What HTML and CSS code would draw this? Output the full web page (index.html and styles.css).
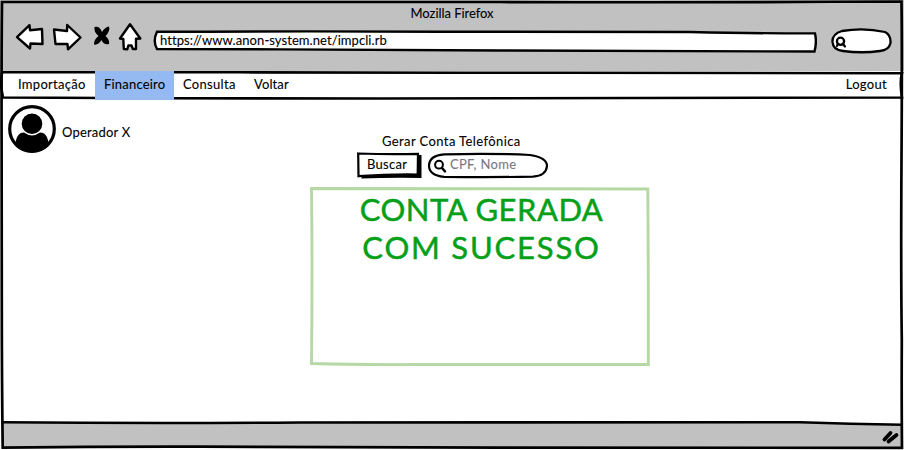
FILE: index.html
```html
<!DOCTYPE html>
<html lang="pt-BR">
<head>
<meta charset="utf-8">
<title>Mozilla Firefox</title>
<link rel="stylesheet" href="styles.css">
</head>
<body>
<div class="window">
  <header class="chrome">
    <div class="title"><span class="t-title">Mozilla Firefox</span></div>
    <div class="toolbar">
      <svg class="tools" width="130" height="30" viewBox="14 22 130 30">
        <g fill="#fff" stroke="#000" stroke-width="2.400" stroke-linejoin="round">
          <path d="M17 37.200 29.500 25.200 30 30.200 42 29 42.500 44 30.500 43.500 30 48.500Z"/>
          <path d="M54 29.500 67 31 67.200 25 80.500 37.500 68 49.300 67.500 44 55.500 44Z"/>
          <path d="M130 24.300 140.300 38.500 136 38.700 136 49 132.800 49 131.500 45.500 128.300 45.500 127.300 49.200 123.800 49 123.300 39 120 38.500Z"/>
        </g>
        <path d="M94.500 27Q99.500 25.500 102 32Q105 27 109 26.500Q110.500 31 105.500 36Q110 40 109 44Q104 45.500 101.500 40Q98 45.500 94 44.500Q93.500 40 98.500 36Q93.500 31.500 94.500 27Z"/>
      </svg>
      <div class="url">
        <svg class="outline" width="664" height="24" viewBox="153 29 664 24"><path d="M157 31.800Q300 31 440 31.700T690 32Q760 33.500 815 33.400Q817 42 814.500 51.500Q650 51 500 50.500T280 49.400L157 49Q152.500 41 157 31.800Z" fill="#fff" stroke="#000" stroke-width="2.400"/></svg>
        <span class="t-url">https://www.anon-system.net/impcli.rb</span>
      </div>
      <div class="find">
        <svg width="62" height="26" viewBox="830 28 62 26"><path d="M842 31Q864 27.500 885 32Q891 35 890.500 43Q889 50 880 51Q862 53.500 843 51Q833 50 832.500 42Q832 34 842 31Z" fill="#fff" stroke="#000" stroke-width="2.300"/><circle cx="840.500" cy="41.300" r="3.600" fill="none" stroke="#000" stroke-width="2.300"/><path d="m842.800 43.800 2.200 2.700M837.500 44.500l-.5 1.500" stroke="#000" stroke-width="2.200" stroke-linecap="round"/></svg>
      </div>
    </div>
  </header>
  <nav class="menu">
    <svg class="outline" width="904" height="29" viewBox="0 71 904 29"><path d="M2 72.300 240 72.300Q400 73 560 72.700T902 73.200Q899.500 82 902 97.500Q600 98.500 380 98.500T160 98.300T3 97.500Q0 86 2 72.300Z" fill="#fff" stroke="#000" stroke-width="2.600"/></svg>
    <a class="item first"><span class="t-imp">Importação</span></a>
    <a class="item active"><span class="t-fin">Financeiro</span></a>
    <a class="item consult"><span class="t-con">Consulta</span></a>
    <a class="item"><span class="t-vol">Voltar</span></a>
    <a class="item last"><span class="t-log">Logout</span></a>
  </nav>
  <main class="page">
    <div class="user">
      <svg width="50" height="50" viewBox="0 0 50 50"><defs><clipPath id="disc"><circle cx="25" cy="25" r="23.500"/></clipPath></defs><circle cx="25" cy="25" r="22.300" fill="#fff" stroke="#000" stroke-width="3.200"/><g clip-path="url(#disc)"><circle cx="25" cy="19.700" r="10.300"/><path d="M8 46Q8 28.500 17 28.600Q25 34.500 33 28.600Q42 28.500 42 46V50H8Z"/></g></svg>
      <span class="t-user">Operador X</span>
    </div>
    <section class="bill">
      <h1><span class="t-head">Gerar Conta Telefônica</span></h1>
      <div class="search">
        <button type="button">
          <svg class="outline" width="66" height="28" viewBox="356 151 66 28"><path d="M361 156 421.500 155V178Q390 177.500 361.500 178.500Z"/><path d="M358.200 153.500Q390 154.500 418 153.800L417.700 174.500Q390 174 358.500 176.200Z" fill="#fff" stroke="#000" stroke-width="2.200"/></svg>
          <span class="t-btn">Buscar</span>
        </button>
        <div class="field">
          <svg class="outline" width="122" height="28" viewBox="427 151 122 28"><path d="M444 154.400Q490 153 530 155Q547 157.500 547 166Q546 176 533 176.600Q490 177.500 444 176.800Q429 175.500 429 165.500Q429.500 155.500 444 154.400Z" fill="#fff" stroke="#000" stroke-width="2.200"/><circle cx="439" cy="164.700" r="3.900" fill="none" stroke="#000" stroke-width="2"/><path d="m442 168 3 3.300" stroke="#000" stroke-width="2.500" stroke-linecap="round"/></svg>
          <span class="t-ph">CPF, Nome</span>
        </div>
      </div>
      <div class="notice">
        <svg class="outline" width="342" height="180" viewBox="309 187 342 180"><path d="M311.500 188.500Q480 189.500 647.800 189Q648.500 280 648.300 364.500Q480 364 420 364.500T311.500 363.500Q312.500 270 311.500 188.500Z" fill="#fff" stroke="#b5d8a5" stroke-width="2.900"/></svg>
        <p><span class="t-n1">CONTA GERADA</span><br><span class="t-n2">COM SUCESSO</span></p>
      </div>
    </section>
  </main>
  <footer class="status">
    <svg width="904" height="30" viewBox="0 420 904 30"><path d="M2 422.500Q180 423.600 330 422.300T800 422Q850 424 902 424.600V447.800Q600 448.500 440 447.500T180 446.500T2 447.500Z" fill="#c1c1c1"/><path d="M2 422.300Q150 423.600 300 422.500T800 422.200Q850 424.100 902 424.700" fill="none" stroke="#000" stroke-width="2.600"/><path d="M884.500 439.500l6-6.500M888.500 441.500l8-6.500" stroke="#000" stroke-width="3.800" stroke-linecap="round"/></svg>
  </footer>
  <svg class="frame" width="904" height="450" viewBox="0 0 904 450"><path d="M2 2Q300 1.300 500 2T901.500 1.500Q902.200 50 901.500 160T901.800 340Q901.500 400 902 447.800Q700 448.500 500 447.700T200 446.700T2.700 447.700Q1.800 380 1.800 300T1.600 140T2 2Z" fill="none" stroke="#000" stroke-width="2.700"/></svg>
</div>
</body>
</html>
```
FILE: styles.css
```css
* { box-sizing: border-box; }
body { margin: 0; background: #fff; color: #000; font-family: Lato, "Open Sans", sans-serif; font-size: 13px; line-height: 18px; }
svg { display: block; }
span { white-space: nowrap; -webkit-text-stroke: .1px currentColor; }
.window { position: relative; display: flex; flex-direction: column; width: 904px; height: 450px; overflow: hidden; }
.frame, .outline { position: absolute; left: 0; top: 0; }
.frame { pointer-events: none; }
.outline + span { position: relative; }
.chrome { height: 71px; padding-top: 4px; background: #c1c1c1; }
.title { display: flex; justify-content: center; height: 18px; }
.toolbar { display: flex; align-items: flex-start; padding-left: 14px; }
.url { position: relative; width: 664px; height: 24px; margin: 7px 0 0 9px; padding: 2px 0 0 7px; }
.find { margin: 6px 0 0 13px; }
.menu { position: relative; display: flex; height: 29px; }
.item { position: relative; height: 29px; padding: 4px 9px 0; }
.first { width: 95px; padding-left: 18px; }
.active { width: 79px; background: #95b9f1; }
.consult { width: 71px; }
.last { margin-left: auto; padding-right: 17px; }
.page { position: relative; display: grid; grid-template-columns: 309px 342px; height: 320px; }
.user { display: flex; align-items: flex-start; gap: 5px; padding: 4px 0 0 7px; }
.user span { margin-top: 19px; }
.bill { padding-top: 32px; }
h1 { height: 19px; margin: 0; font-size: 13px; line-height: 18px; font-weight: 400; padding-left: 73px; }
.search { display: flex; gap: 5px; padding-left: 47px; }
button { position: relative; width: 66px; height: 28px; padding: 4px 0 6px 11px; border: 0; background: none; font: inherit; text-align: left; color: #000; }
.field { position: relative; width: 122px; height: 28px; padding: 4px 0 0 23px; color: #777982; }
.notice { position: relative; width: 342px; height: 180px; margin-top: 8px; padding: 3px 0 0 3px; color: #06a018; text-align: center; }
.notice p { position: relative; margin: 0; font-size: 31px; line-height: 38px; }
.notice span { -webkit-text-stroke-width: .5px; }
.t-imp, .t-con, .t-log, .t-btn, .t-ph { letter-spacing: .3px; }
.t-vol { letter-spacing: .1px; }
.t-title { letter-spacing: -.05px; }
.t-url { letter-spacing: .07px; }
.t-fin, .t-user { letter-spacing: .2px; }
.t-head { letter-spacing: .4px; }
.t-n1 { letter-spacing: .5px; }
.t-n2 { letter-spacing: 1.800px; }
```
